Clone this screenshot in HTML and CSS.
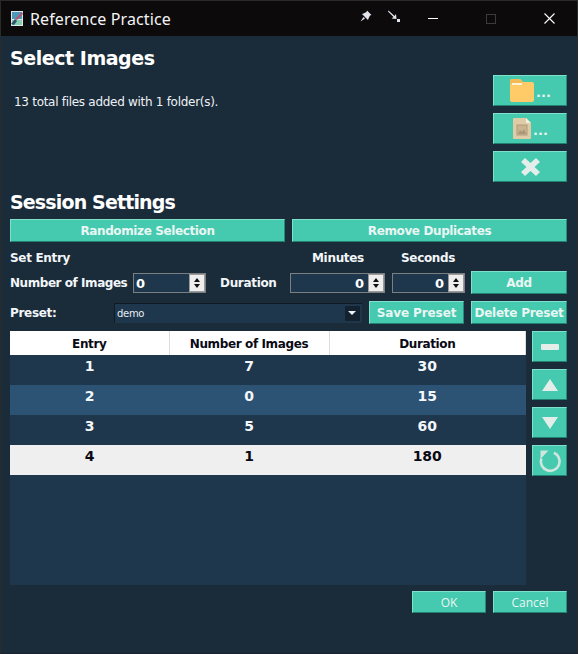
FILE: index.html
```html
<!DOCTYPE html>
<html lang="en">

<head>
    <meta charset="UTF-8">
    <meta name="viewport" content="width=device-width, initial-scale=1.0">
    <title>Reference Practice</title>
    <link rel="stylesheet" href="styles.css">
</head>

<body>
    <div id="window">
        <header id="titlebar">
            <svg class="appicon" width="14" height="15" viewBox="0 0 14 15">
                <rect x="1" width="12" height="15" fill="#dfe8ea" />
                <rect x="2" y="1" width="10" height="7" fill="#4f97b8" />
                <rect x="2" y="9" width="10" height="5" fill="#86cdb2" />
                <path d="M12 1 L13 3 L7 9 L5 8 Z" fill="#b8566e" />
                <path d="M5 8 L7 10 L4 14 L1 13 Z" fill="#2f5266" />
            </svg>
            <span class="apptitle">Reference Practice</span>
            <svg class="tbicon pin" width="12" height="12" viewBox="0 0 12 12">
                <path d="M7 0.5 L11.5 5 L10 5.5 L8.5 8.5 L8 10 L2 4 L3.5 3.5 L6.5 2 Z" fill="#e4e6ee" />
                <path d="M3.5 7 L0.5 11.5 L5 8.5 Z" fill="#e4e6ee" />
            </svg>
            <svg class="tbicon unpin" width="12" height="12" viewBox="0 0 12 12">
                <path d="M0.5 0.5 L6.5 6 L8 4 L8.5 9 L3.5 8.5 L5.5 7 L0 1.5 Z" fill="#e4e6ee" />
                <rect x="9" y="9" width="3" height="3" fill="#e4e6ee" />
            </svg>
            <div class="winbtn"><span class="minbar"></span></div>
            <div class="winbtn"><span class="maxbox"></span></div>
            <div class="winbtn">
                <svg width="11" height="11" viewBox="0 0 11 11">
                    <path d="M0.5 0.5 L10.5 10.5 M10.5 0.5 L0.5 10.5" stroke="#fff" stroke-width="1.1" />
                </svg>
            </div>
        </header>

        <main id="content">
            <section class="selectimages">
                <div class="selectleft">
                    <h2 class="selecthead">Select Images</h2>
                    <p class="filecount">13 total files added with 1 folder(s).</p>
                </div>
                <div class="selectbuttons">
                    <button class="btn iconbtn">
                        <svg width="24" height="23" viewBox="0 0 24 23">
                            <path d="M0 2 Q0 0 2 0 H10 L13 3 H22 Q24 3 24 5 V21 Q24 23 22 23 H2 Q0 23 0 21 Z" fill="#fecb68" />
                            <path d="M0 2 Q0 0 2 0 H10 L13 3 L10 5 H0 Z" fill="#f5b955" />
                            <rect x="2" y="4" width="10" height="2" fill="#fff3d6" />
                        </svg>
                        <span class="dots">...</span>
                    </button>
                    <button class="btn iconbtn">
                        <svg width="18" height="21" viewBox="0 0 18 21">
                            <path d="M1 0 H13 L18 5 V20 Q18 21 17 21 H1 Q0 21 0 20 V1 Q0 0 1 0 Z" fill="#dfcba6" />
                            <path d="M13 0 L18 5 H13 Z" fill="#f4ede0" />
                            <rect x="4" y="7" width="10" height="10" fill="#c9b48f" stroke="#b09c7c" />
                            <path d="M5 16 L7 12 L9 14 L11 11 L13 16 Z" fill="#a99577" />
                        </svg>
                        <span class="dots">...</span>
                    </button>
                    <button class="btn iconbtn">
                        <svg width="19" height="18" viewBox="0 0 19 18">
                            <path d="M0 4 L4 0 L9.5 5 L15 0 L19 4 L13.5 9 L19 14 L15 18 L9.5 13 L4 18 L0 14 L5.5 9 Z" fill="#e3eeeb" />
                        </svg>
                    </button>
                </div>
            </section>

            <h2 class="sessionhead">Session Settings</h2>
            <div class="row toprow">
                <button class="btn widebtn">Randomize Selection</button>
                <button class="btn widebtn">Remove Duplicates</button>
            </div>

            <div class="row labelrow">
                <span class="label setentry">Set Entry</span>
                <span class="label minuteslabel">Minutes</span>
                <span class="label secondslabel">Seconds</span>
            </div>

            <div class="row entryrow">
                <span class="label numlabel">Number of Images</span>
                <div class="spin numspin">
                    <span class="spinval left">0</span>
                    <span class="arrows"><i class="up"></i><i class="down"></i></span>
                </div>
                <span class="label durlabel">Duration</span>
                <div class="spin minspin">
                    <span class="spinval">0</span>
                    <span class="arrows"><i class="up"></i><i class="down"></i></span>
                </div>
                <div class="spin secspin">
                    <span class="spinval">0</span>
                    <span class="arrows"><i class="up"></i><i class="down"></i></span>
                </div>
                <button class="btn addbtn">Add</button>
            </div>

            <div class="row presetrow">
                <span class="label presetlabel">Preset:</span>
                <div class="combo">
                    <span class="comboval">demo</span>
                    <span class="comboarrow"></span>
                </div>
                <button class="btn savebtn">Save Preset</button>
                <button class="btn deletebtn">Delete Preset</button>
            </div>

            <div class="row tablerow">
                <div class="tablewrap">
                    <table>
                        <thead>
                            <tr>
                                <th class="col1">Entry</th>
                                <th class="col2">Number of Images</th>
                                <th class="col3">Duration</th>
                            </tr>
                        </thead>
                        <tbody>
                            <tr><td>1</td><td>7</td><td>30</td></tr>
                            <tr class="alt"><td>2</td><td>0</td><td>15</td></tr>
                            <tr><td>3</td><td>5</td><td>60</td></tr>
                            <tr class="selected"><td>4</td><td>1</td><td>180</td></tr>
                        </tbody>
                    </table>
                </div>
                <div class="sidebuttons">
                    <button class="btn sidebtn"><span class="minusbar"></span></button>
                    <button class="btn sidebtn">
                        <svg width="16" height="12" viewBox="0 0 16 12"><path d="M8 0 L16 12 H0 Z" fill="#e3eeeb" /></svg>
                    </button>
                    <button class="btn sidebtn">
                        <svg width="16" height="12" viewBox="0 0 16 12"><path d="M0 0 H16 L8 12 Z" fill="#e3eeeb" /></svg>
                    </button>
                    <button class="btn sidebtn">
                        <svg width="24" height="24" viewBox="0 0 24 24">
                            <path d="M3.3 9.5 A 9.4 9.4 0 1 0 15.8 3.7" fill="none" stroke="#cfe6df" stroke-width="2.6" />
                            <path d="M2.5 1.5 L10.5 1.5 L2.5 10 Z" fill="#cfe6df" />
                        </svg>
                    </button>
                </div>
            </div>

            <div class="row dialogbuttons">
                <button class="btn dlgbtn">OK</button>
                <button class="btn dlgbtn">Cancel</button>
            </div>
        </main>
    </div>
</body>

</html>
```

FILE: styles.css
```css
* {
    box-sizing: border-box;
}

html,
body {
    margin: 0;
    height: 100%;
}

body {
    font-family: "DejaVu Sans", sans-serif;
    background-color: #1a2b3a;
    color: white;
}

#window {
    width: 578px;
    height: 654px;
    border: 1px solid #2a2a2a;
    border-bottom-color: #1a2230;
    display: flex;
    flex-direction: column;
    overflow: hidden;
}

/* title bar */
#titlebar {
    height: 35px;
    background-color: #0c0a0b;
    display: flex;
    align-items: center;
    padding-left: 9px;
    flex-shrink: 0;
}

.appicon {
    margin-right: 6px;
    flex-shrink: 0;
}

.apptitle {
    font-family: "Noto Sans", sans-serif;
    font-size: 16px;
    letter-spacing: 0.12px;
    color: #f4f4f4;
    width: 330px;
    flex-shrink: 0;
}

.tbicon {
    margin-bottom: 6px;
    flex-shrink: 0;
}

.unpin {
    margin-left: 16px;
}

.winbtn {
    width: 58px;
    height: 35px;
    display: flex;
    align-items: center;
    justify-content: center;
    flex-shrink: 0;
}

.winbtn:nth-of-type(1) {
    margin-left: 4px;
}

.minbar {
    width: 10px;
    height: 1px;
    background-color: #fff;
}

.maxbox {
    width: 10px;
    height: 10px;
    border: 1px solid #3c3a3b;
}

/* main area */
#content {
    flex: 1;
    padding: 0 10px 0 9px;
    display: flex;
    flex-direction: column;
}

h2 {
    margin: 0;
    font-size: 19px;
    line-height: 24px;
    font-weight: bold;
}

.selecthead {
    letter-spacing: -0.45px;
}

.selectimages {
    display: flex;
    justify-content: space-between;
    height: 154px;
}

.selectleft h2 {
    margin-top: 10px;
}

.filecount {
    margin: 24px 0 0 4px;
    font-size: 12px;
    line-height: 16px;
    letter-spacing: -0.29px;
    color: #eef2f5;
}

.selectbuttons {
    display: flex;
    flex-direction: column;
    gap: 7px;
    padding-top: 39px;
}

.btn {
    font-family: "DejaVu Sans", sans-serif;
    font-size: 12px;
    letter-spacing: -0.38px;
    font-weight: bold;
    color: #eaf6f3;
    background-color: #45c9af;
    border: 1px solid #45c9af;
    border-top-color: #7fe0cc;
    border-left-color: #7fe0cc;
    border-right-color: #2a8c78;
    border-bottom-color: #22806e;
    padding: 0;
    display: flex;
    align-items: center;
    justify-content: center;
}

.iconbtn {
    width: 74px;
    height: 31px;
}

.dots {
    font-size: 13px;
    letter-spacing: 0;
    line-height: 13px;
    align-self: flex-end;
    margin-bottom: 6px;
    margin-left: 2px;
    width: 14px;
}

.sessionhead {
    height: 24px;
    letter-spacing: -0.85px;
}

.row {
    display: flex;
}

.toprow {
    margin-top: 5px;
    gap: 7px;
}

.widebtn {
    flex: 1;
    height: 23px;
    padding-top: 1px;
}

.label {
    font-size: 12px;
    letter-spacing: -0.32px;
    font-weight: bold;
    color: #f2f6f8;
    white-space: nowrap;
}

.labelrow {
    margin-top: 9px;
    height: 15px;
    line-height: 15px;
}

.setentry {
    width: 302px;
}

.minuteslabel {
    width: 89px;
}

.entryrow {
    margin-top: 4px;
    height: 24px;
    align-items: center;
}

.numlabel {
    width: 123px;
    letter-spacing: -0.45px;
    padding-top: 2px;
}

.spin {
    height: 20px;
    margin-top: 2px;
    border: 1px solid #7b7f82;
    background-color: #1e374d;
    display: flex;
    align-items: center;
    font-size: 13px;
    font-weight: bold;
}

.numspin {
    width: 73px;
}

.durlabel {
    margin-left: 14px;
    width: 70px;
    padding-top: 2px;
}

.minspin {
    width: 95px;
}

.secspin {
    width: 73px;
    margin-left: 7px;
}

.addbtn {
    width: 96px;
    height: 23px;
    margin-left: 6px;
    padding-top: 2px;
}

.spinval {
    flex: 1;
    text-align: right;
    padding-right: 4px;
}

.spinval.left {
    text-align: left;
    padding-left: 2px;
}

.arrows {
    width: 16px;
    height: 18px;
    background-color: #eeeeee;
    border: 1px solid #9a9a9a;
    display: flex;
    flex-direction: column;
    align-items: center;
    justify-content: space-around;
    padding: 2px 0;
}

.up,
.down {
    width: 0;
    height: 0;
    border-left: 3.5px solid transparent;
    border-right: 3.5px solid transparent;
}

.up {
    border-bottom: 4px solid #111;
}

.down {
    border-top: 4px solid #111;
}

.presetrow {
    margin-top: 7px;
    height: 23px;
    align-items: center;
}

.presetlabel {
    width: 104px;
    padding-top: 1px;
}

.combo {
    width: 248px;
    height: 20px;
    background-color: #1e374d;
    border-top: 1px solid #0f1a24;
    border-left: 1px solid #0f1a24;
    display: flex;
    align-items: center;
    justify-content: space-between;
    padding: 0 2px 0 2px;
}

.comboval {
    font-size: 10px;
    letter-spacing: -0.3px;
    color: #e6ecf0;
}

.comboarrow {
    width: 15px;
    height: 15px;
    background-color: #14222f;
    position: relative;
}

.comboarrow::after {
    content: "";
    position: absolute;
    left: 3px;
    top: 5px;
    border-left: 4px solid transparent;
    border-right: 4px solid transparent;
    border-top: 4px solid #eef2f5;
}

.savebtn {
    width: 95px;
    height: 23px;
    margin-left: 7px;
    letter-spacing: -0.1px;
    padding-top: 1px;
}

.deletebtn {
    width: 96px;
    height: 23px;
    margin-left: 7px;
    letter-spacing: -0.25px;
    white-space: nowrap;
    padding-top: 1px;
}

.tablerow {
    margin-top: 7px;
    gap: 6px;
}

.tablewrap {
    width: 516px;
    height: 254px;
    background-color: #1e374d;
}

table {
    width: 516px;
    border-collapse: collapse;
    table-layout: fixed;
}

th {
    height: 24px;
    padding: 1px 0 0;
    background-color: #fff;
    color: #0a0a14;
    font-size: 12px;
    letter-spacing: -0.38px;
    font-weight: bold;
    border-right: 1px solid #dddddd;
}

.col1 {
    width: 159px;
}

.col2 {
    width: 160px;
}

td {
    height: 30px;
    padding: 0 0 9px;
    text-align: center;
    font-size: 14px;
    font-weight: bold;
    color: #f4f7f9;
}

.alt td {
    background-color: #2c5274;
}

.selected td {
    background-color: #efefef;
    color: #0a0a14;
}

.sidebuttons {
    display: flex;
    flex-direction: column;
    gap: 7px;
}

.sidebtn {
    width: 35px;
    height: 31px;
}

.minusbar {
    width: 18px;
    height: 6px;
    border-radius: 1px;
    background-color: #e3eeeb;
}

.dialogbuttons {
    margin-top: 6px;
    justify-content: flex-end;
    gap: 7px;
}

.dlgbtn {
    width: 74px;
    height: 22px;
    font-family: "Open Sans", sans-serif;
    font-weight: normal;
    letter-spacing: 0;
}
```
